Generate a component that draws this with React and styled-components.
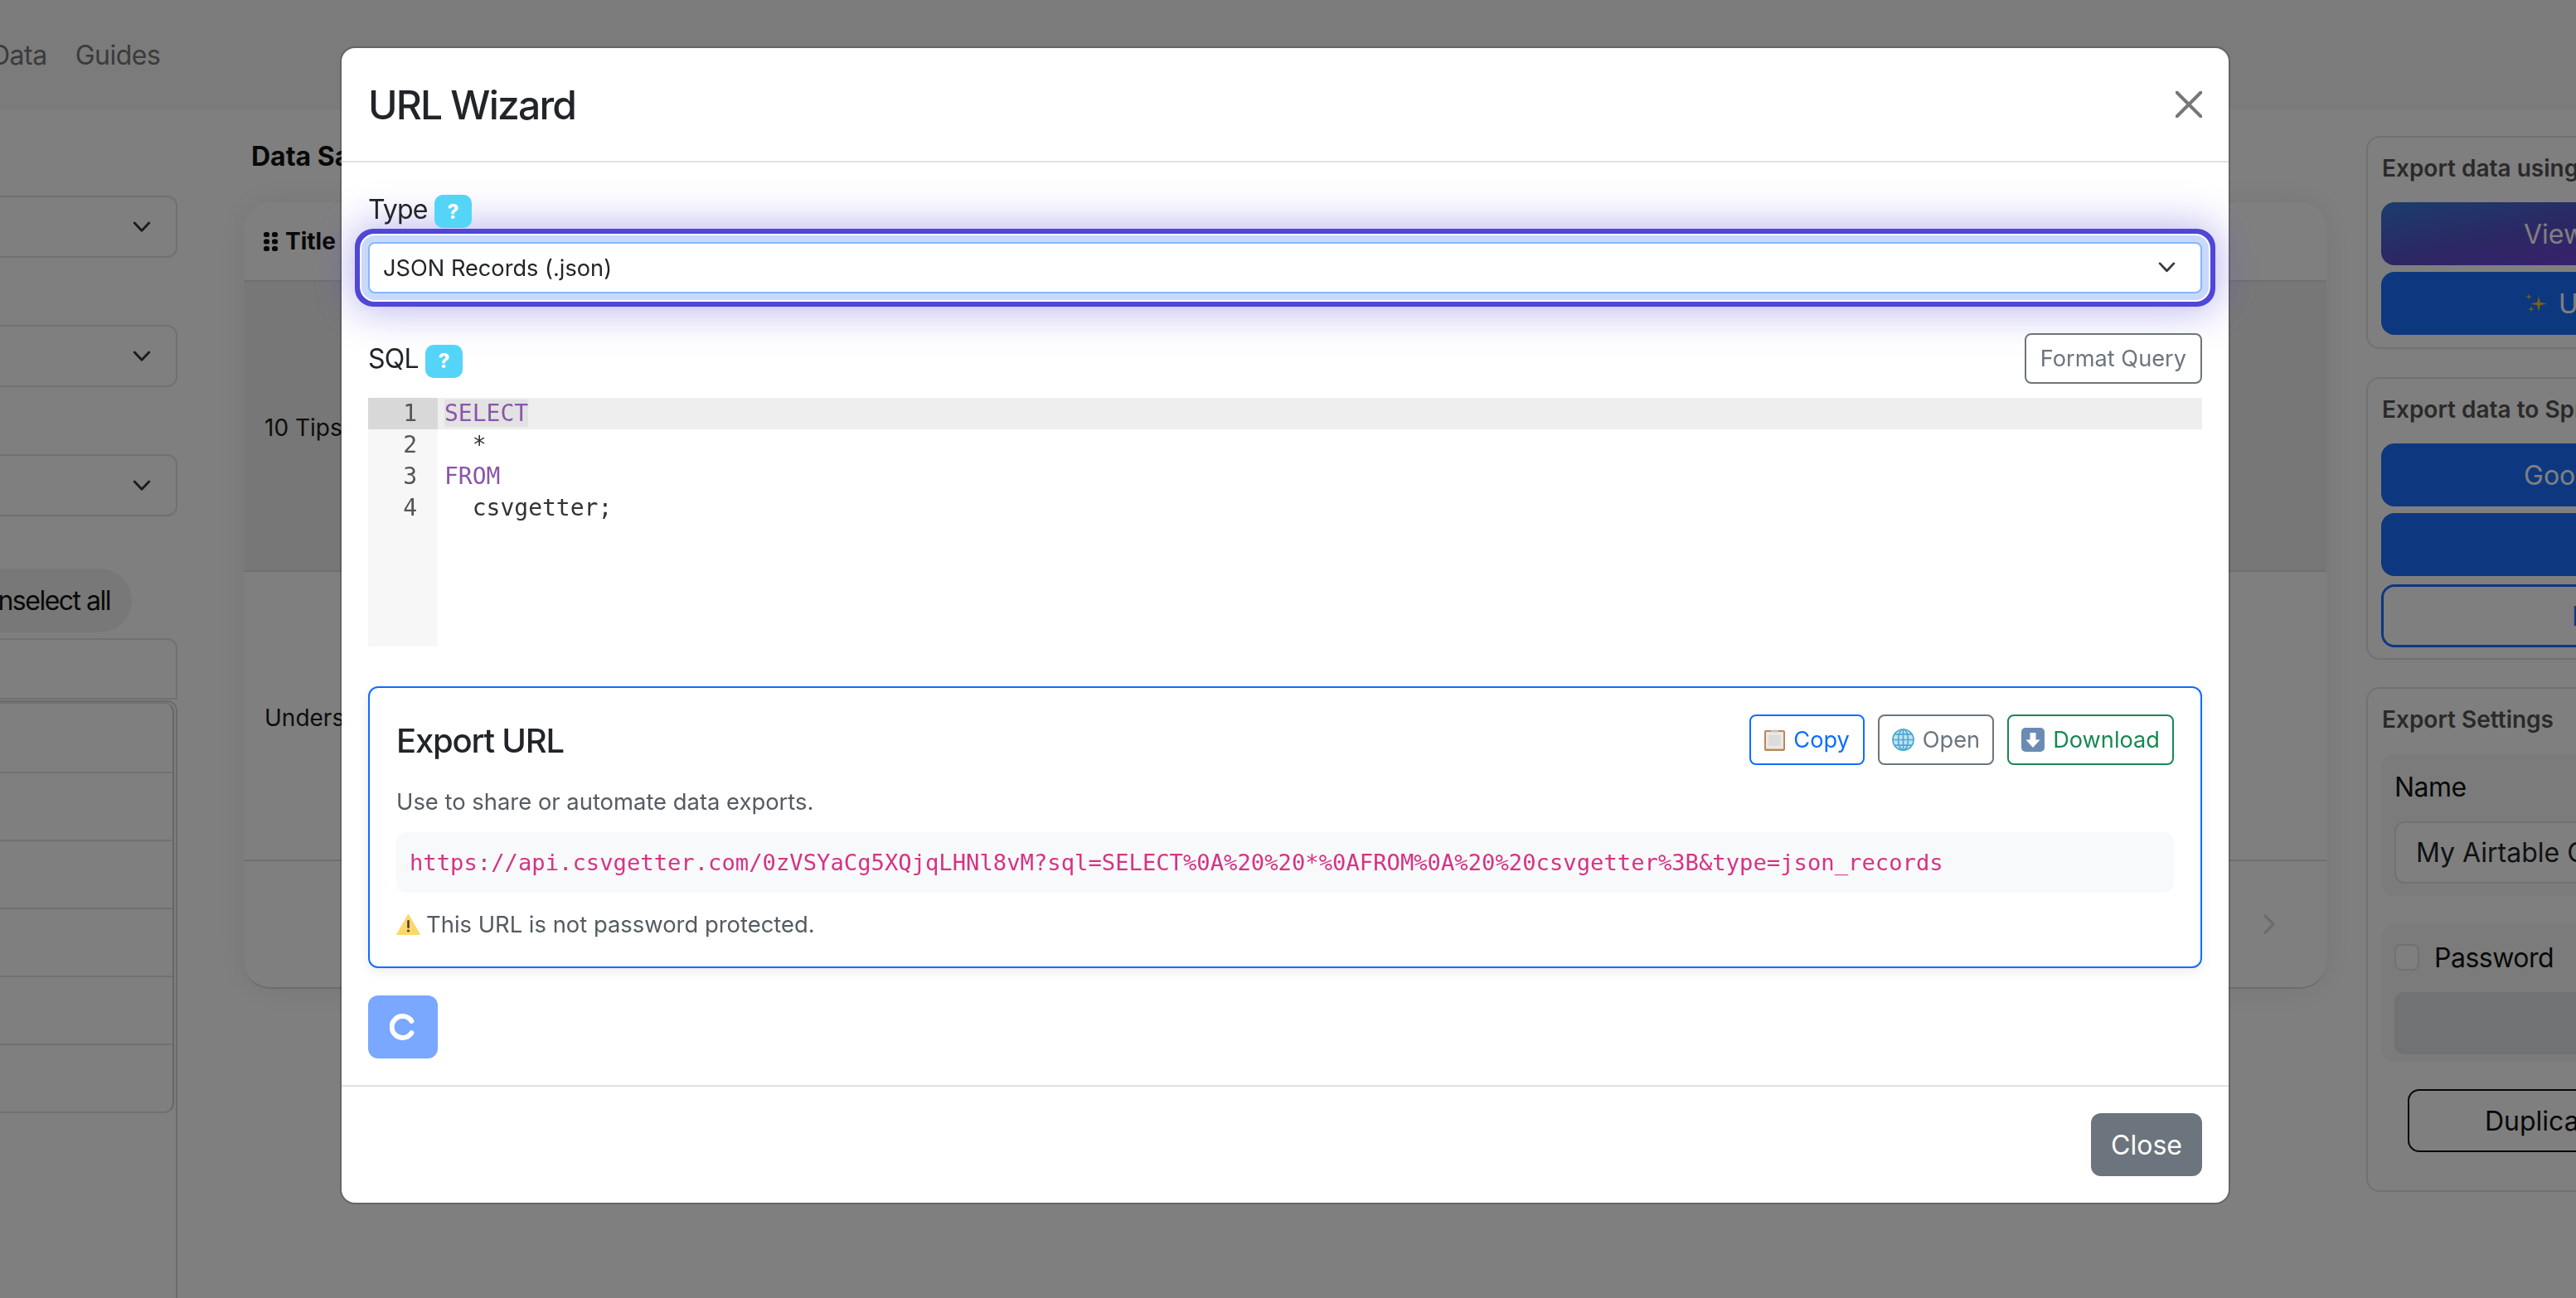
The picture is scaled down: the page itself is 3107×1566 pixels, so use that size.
import React from "react";
import styled, { createGlobalStyle } from "styled-components";

const GlobalStyle = createGlobalStyle`
  html, body {
    margin: 0;
    width: 3107px;
    height: 1566px;
    overflow: hidden;
    background: #fff;
    font-family: Inter, "Liberation Sans", sans-serif;
    color: #212529;
  }
  * { box-sizing: border-box; }
`;

const Page = styled.div`
  width: 3107px;
  height: 1566px;
  display: flex;
  flex-direction: column;
  overflow: hidden;
`;

const Navbar = styled.div`
  height: 133px;
  flex: none;
  background: #f7f7f7;
  display: flex;
  align-items: center;
  gap: 34px;
  margin-left: -11px;
  font-size: 32px;
  letter-spacing: -0.5px;
  color: #777;
`;

const Columns = styled.div`
  flex: 1;
  display: flex;
  min-height: 0;
`;

const Sidebar = styled.div`
  width: 214px;
  flex: none;
  padding-top: 103px;
  display: flex;
  flex-direction: column;
  overflow: hidden;
`;

const SideSelect = styled.div`
  height: 75px;
  flex: none;
  margin: ${({ $top }) => $top || 0}px 0 0 -40px;
  border: 2px solid #dee2e6;
  border-radius: 12px;
  display: flex;
  align-items: center;
  justify-content: flex-end;
  padding-right: 30px;
`;

const Pill = styled.div`
  height: 77px;
  width: 200px;
  flex: none;
  margin: 63px 0 0 -41px;
  border-radius: 39px;
  background: #f0f0f0;
  display: flex;
  align-items: center;
  justify-content: flex-end;
  padding-right: 26px;
  font-size: 32px;
  letter-spacing: -1.5px;
  color: #111;
  white-space: nowrap;
`;

const SideInput = styled.div`
  height: 74px;
  flex: none;
  margin: 7px 0 0 -40px;
  border: 2px solid #dee2e6;
  border-radius: 12px 12px 0 0;
`;

const ListFrame = styled.div`
  flex: 1;
  margin: 1px 0 0 -40px;
  border-right: 2px solid #d4d6d9;
  border-top: 2px solid #d4d6d9;
  border-top-right-radius: 12px;
`;

const ListGroup = styled.div`
  margin-right: 2px;
  border: 2px solid #dee2e6;
  border-right-color: #ccc;
  border-radius: 0 12px 12px 0;
`;

const ListRow = styled.div`
  height: 82px;
  border-top: ${({ $first }) => ($first ? "none" : "2px solid #dee2e6")};
`;

const Center = styled.div`
  width: 2512px;
  flex: none;
  margin-left: 80px;
  padding-top: 38px;
`;

const SectionTitle = styled.div`
  font-size: 32px;
  line-height: 36px;
  font-weight: 700;
  color: #111;
  margin-left: 9px;
`;

const TableCard = styled.div`
  margin-top: 37px;
  height: 949px;
  border-radius: 32px;
  box-shadow: 0 0 40px rgba(0, 0, 0, 0.08);
  border-bottom: 2px solid #d8d8d8;
  display: flex;
  flex-direction: column;
  overflow: hidden;
`;

const TableHead = styled.div`
  height: 96px;
  flex: none;
  border-bottom: 2px solid #dedede;
  display: flex;
  align-items: center;
  gap: 9px;
  padding-left: 24px;
  font-size: 28px;
  font-weight: 700;
  color: #111;
`;

const TableRow = styled.div`
  height: ${({ $h }) => $h}px;
  flex: none;
  background: ${({ $hover }) => ($hover ? "#eeeeee" : "#fff")};
  border-bottom: 2px solid #dedede;
  display: flex;
  align-items: center;
  padding: 4px 0 0 25px;
  font-size: 28px;
  color: #1a1a1a;
`;

const TableFoot = styled.div`
  flex: 1;
  display: flex;
  align-items: center;
  justify-content: flex-end;
  padding-right: 62px;
`;

const RightColumn = styled.div`
  width: 560px;
  flex: none;
  margin-left: 48px;
  padding-top: 31px;
`;

const Panel = styled.div`
  height: ${({ $h }) => $h}px;
  margin-bottom: ${({ $gap }) => $gap || 0}px;
  border: 2px solid #dee2e6;
  border-radius: 16px;
  padding: 0 16px;
`;

const PanelTitle = styled.div`
  height: 78px;
  display: flex;
  align-items: center;
  padding: 0 1px 4px;
  font-size: 28px;
  font-weight: 600;
  color: #555;
`;

const WideButton = styled.div`
  height: 76px;
  margin-bottom: ${({ $gap }) => $gap ?? 8}px;
  border-radius: 16px;
  border: ${({ $outline }) => ($outline ? "3px solid #1a70ff" : "none")};
  background: ${({ $outline, $gradient }) =>
    $gradient
      ? "linear-gradient(168deg, #367ada 0%, #5a4ec8 40%, #8e38f0 100%)"
      : $outline
      ? "#fff"
      : "#1a70ff"};
  color: ${({ $outline }) => ($outline ? "#1a70ff" : "#fff")};
  display: flex;
  align-items: center;
  gap: 12px;
  padding-left: ${({ $indent }) => $indent}px;
  font-size: 32px;
  white-space: nowrap;
`;

const SettingsBlock = styled.div`
  height: ${({ $h }) => $h}px;
  margin-bottom: 34px;
  border-radius: 16px;
  background: #f6f6f6;
  padding: 15px 16px 0;
`;

const FieldLabel = styled.div`
  height: 50px;
  display: flex;
  align-items: center;
  font-size: 32px;
  letter-spacing: -0.5px;
  color: #111;
  gap: 18px;
  margin-bottom: 17px;
`;

const FieldInput = styled.div`
  height: 75px;
  border: 2px solid #dee2e6;
  border-radius: 12px;
  background: ${({ $disabled }) => ($disabled ? "#e1e4e9" : "#fff")};
  display: flex;
  align-items: center;
  padding-left: 24px;
  font-size: 32px;
  color: #212529;
  white-space: nowrap;
`;

const CheckBox = styled.div`
  width: 30px;
  height: 32px;
  border: 2px solid #dee2e6;
  border-radius: 8px;
  background: #fff;
`;

const OutlineDark = styled.div`
  height: 76px;
  margin: -2px 0 0 32px;
  border: 2px solid #111;
  border-radius: 14px;
  display: flex;
  align-items: center;
  padding-left: 91px;
  font-size: 32px;
  color: #111;
  white-space: nowrap;
`;

const Backdrop = styled.div`
  position: fixed;
  inset: 0;
  background: rgba(0, 0, 0, 0.5);
`;

const Modal = styled.div`
  position: fixed;
  top: 58px;
  left: 412px;
  width: 2276px;
  height: 1393px;
  background: #fff;
  border-radius: 16px;
  box-shadow: 0 0 0 2px rgba(0, 0, 0, 0.2);
  display: flex;
  flex-direction: column;
`;

const ModalHeader = styled.div`
  height: 138px;
  flex: none;
  border-bottom: 2px solid #dee2e6;
  display: flex;
  align-items: center;
  justify-content: space-between;
  padding: 0 32px;
`;

const ModalTitle = styled.div`
  font-size: 48px;
  font-weight: 500;
  letter-spacing: -1.8px;
  color: #212529;
`;

const ModalBody = styled.div`
  flex: 1;
  padding: 32px 32px 0;
`;

const LabelRow = styled.div`
  height: ${({ $h }) => $h}px;
  display: flex;
  align-items: center;
  justify-content: ${({ $split }) => ($split ? "space-between" : "flex-start")};
  margin: ${({ $mt }) => $mt || 0}px 0 ${({ $mb }) => $mb}px;
`;

const LabelGroup = styled.div`
  display: flex;
  align-items: center;
  gap: 8px;
  font-size: 32px;
  letter-spacing: -0.8px;
  color: #212529;
`;

const HelpBadge = styled.span`
  width: 45px;
  height: 40px;
  margin-top: 6px;
  border-radius: 10px;
  background: #54d5f7;
  color: #fff;
  font-size: 24px;
  font-weight: 800;
  display: flex;
  align-items: center;
  justify-content: center;
`;

const TypeSelect = styled.div`
  height: 62px;
  border: 2px solid #86b7fe;
  border-radius: 8px;
  background: #fff;
  box-shadow: 0 0 0 8px #c8d9fc, 0 0 0 10px #fff, 0 0 0 16px #5046d8,
    0 0 50px 20px rgba(80, 70, 216, 0.4);
  display: flex;
  align-items: center;
  justify-content: space-between;
  padding: 0 30px 0 16px;
  font-size: 27.2px;
  color: #212529;
`;

const ActionButton = styled.div`
  height: 61px;
  border: 2px solid ${({ $tone }) => $tone};
  border-radius: 8px;
  background: #fff;
  color: ${({ $tone }) => $tone};
  display: flex;
  align-items: center;
  gap: 10px;
  padding: 0 ${({ $pad }) => $pad || 16}px;
  font-size: 27.2px;
  white-space: nowrap;
`;

const Editor = styled.div`
  height: 300px;
  display: grid;
  grid-template-columns: 84px 1fr;
  grid-auto-rows: 38px;
  background: linear-gradient(to right, #f7f7f7 84px, #fff 84px);
  font-family: "DejaVu Sans Mono", monospace;
  font-size: 28px;
  line-height: 38px;
  color: #333;
`;

const LineNumber = styled.div`
  background: ${({ $active }) => ($active ? "#d8d8d8" : "transparent")};
  color: #555;
  text-align: right;
  padding-right: 25px;
`;

const LineText = styled.div`
  background: ${({ $active }) => ($active ? "#eeeeee" : "transparent")};
  padding-left: 8px;
  white-space: pre;
`;

const Keyword = styled.span`
  color: #8a56a8;
  background: ${({ $match }) => ($match ? "#e2e2e2" : "transparent")};
`;

const ExportCard = styled.div`
  margin-top: 48px;
  border: 2px solid #0d6efd;
  border-radius: 12px;
  padding: 32px 32px 27px;
  box-shadow: 0 4px 14px rgba(0, 0, 0, 0.08);
`;

const CardTop = styled.div`
  display: flex;
  align-items: center;
  justify-content: space-between;
`;

const CardTitle = styled.div`
  padding-top: 2px;
  font-size: 40px;
  font-weight: 500;
  letter-spacing: -1.2px;
  color: #212529;
`;

const ButtonRow = styled.div`
  display: flex;
  gap: 16px;
`;

const Muted = styled.div`
  height: 48px;
  margin-top: ${({ $top }) => $top}px;
  display: flex;
  align-items: center;
  gap: 7px;
  font-size: 27.4px;
  color: #555b60;
`;

const UrlBlock = styled.div`
  height: 73px;
  margin-top: 13px;
  border-radius: 12px;
  background: #f8f9fa;
  display: flex;
  align-items: center;
  padding-left: 16px;
  font-family: "DejaVu Sans Mono", monospace;
  font-size: 27.2px;
  color: #d63384;
  white-space: nowrap;
`;

const ReloadButton = styled.div`
  width: 84px;
  height: 76px;
  margin-top: 33px;
  border-radius: 12px;
  background: #7aa7ff;
  display: flex;
  align-items: center;
  justify-content: center;
`;

const ModalFooter = styled.div`
  height: 142px;
  flex: none;
  border-top: 2px solid #dee2e6;
  display: flex;
  align-items: center;
  justify-content: flex-end;
  padding: 0 32px;
`;

const CloseButton = styled.div`
  width: 134px;
  height: 76px;
  border-radius: 12px;
  background: #6c757d;
  color: #fff;
  font-size: 32px;
  display: flex;
  align-items: center;
  justify-content: center;
`;

const Chevron = ({ color = "#343a40", width = 22 }) => (
  <svg width={width} height={width * 0.62} viewBox="0 0 22 14" fill="none">
    <path d="M2 2l9 9.5L20 2" stroke={color} strokeWidth="3" strokeLinecap="round" strokeLinejoin="round" />
  </svg>
);

const CloseIcon = () => (
  <svg width="32" height="32" viewBox="0 0 32 32" fill="none">
    <path d="M1.5 1.5l29 29M30.5 1.5l-29 29" stroke="#777" strokeWidth="4" strokeLinecap="round" />
  </svg>
);

const GripIcon = () => (
  <svg width="17" height="23" viewBox="0 0 17 23" fill="#111">
    <rect x="0" y="0" width="7" height="6" rx="2.5" />
    <rect x="10" y="0" width="7" height="6" rx="2.5" />
    <rect x="0" y="8.5" width="7" height="6" rx="2.5" />
    <rect x="10" y="8.5" width="7" height="6" rx="2.5" />
    <rect x="0" y="17" width="7" height="6" rx="2.5" />
    <rect x="10" y="17" width="7" height="6" rx="2.5" />
  </svg>
);

const ClipboardIcon = () => (
  <svg width="25" height="27" viewBox="0 0 25 27">
    <rect x="0" y="2" width="25" height="25" rx="2" fill="#b98a55" />
    <rect x="2" y="4" width="21" height="20.5" fill="#e9e9e9" />
    <rect x="5" y="8" width="15" height="13" fill="#dcdcdc" />
    <path d="M8 4.5V2.5h3C11.3.5 13.7.5 14 2.5h3v2z" fill="#c4c8cc" />
  </svg>
);

const GlobeIcon = () => (
  <svg width="27" height="27" viewBox="0 0 27 27" fill="none">
    <circle cx="13.5" cy="13.5" r="13.3" fill="#bfe3f2" />
    <g stroke="#4ea8cf" strokeWidth="1.7">
      <circle cx="13.5" cy="13.5" r="12.5" />
      <ellipse cx="13.5" cy="13.5" rx="6" ry="12.5" />
      <path d="M13.5 1v25M1 13.5h25M3 6.8h21M3 20.2h21" />
    </g>
  </svg>
);

const DownloadIcon = () => (
  <svg width="28" height="29" viewBox="0 0 28 29">
    <rect width="28" height="29" rx="5" fill="#6b8bb3" />
    <path d="M10.5 6h7v8.5h5L14 24 5.5 14.5h5z" fill="#fff" />
  </svg>
);

const WarningIcon = () => (
  <svg width="29" height="26" viewBox="0 0 29 26">
    <path d="M14.5 1L28.5 25.5H.5z" fill="#ffd768" stroke="#ffd768" strokeLinejoin="round" />
    <rect x="13.2" y="8" width="2.6" height="10" rx="1.2" fill="#444" />
    <circle cx="14.5" cy="21" r="1.6" fill="#444" />
  </svg>
);

const SparkleIcon = () => (
  <svg width="29" height="29" viewBox="0 0 29 29" fill="#f1c22f">
    <path d="M17 5l1.8 7.7 8.2 1.8-8.2 1.8L17 24l-1.8-7.7-8.2-1.8 8.2-1.8z" />
    <path d="M5 2l.8 3.2L9 6l-3.2.8L5 10l-.8-3.2L1 6l3.2-.8z" />
    <path d="M8 17l.8 3.2 3.2.8-3.2.8L8 25l-.8-3.2L4 21l3.200-.8z" />
  </svg>
);

const Spinner = () => (
  <svg width="32" height="32" viewBox="0 0 32 32" fill="none">
    <path d="M26.4 8.8A13 13 0 1 0 26.4 23.2" stroke="#fff" strokeWidth="6" strokeLinecap="round" />
  </svg>
);

const PageArrow = () => (
  <svg width="14" height="24" viewBox="0 0 14 24" fill="none">
    <path d="M2 2l10 10L2 22" stroke="#d8d8d8" strokeWidth="3.4" strokeLinecap="round" strokeLinejoin="round" />
  </svg>
);

const exportUrl =
  "https://api.csvgetter.com/0zVSYaCg5XQjqLHNl8vM?sql=SELECT%0A%20%20*%0AFROM%0A%20%20csvgetter%3B&type=json_records";

const App = () => {
  return (
    <>
      <GlobalStyle />
      <Page>
        <Navbar>
          <span>Data</span>
          <span>Guides</span>
        </Navbar>
        <Columns>
          <Sidebar>
            <SideSelect><Chevron /></SideSelect>
            <SideSelect $top={81}><Chevron /></SideSelect>
            <SideSelect $top={81}><Chevron /></SideSelect>
            <Pill>Unselect all</Pill>
            <SideInput />
            <ListFrame>
              <ListGroup>
                {[0, 1, 2, 3, 4, 5].map((i) => (
                  <ListRow key={i} $first={i === 0} />
                ))}
              </ListGroup>
            </ListFrame>
          </Sidebar>
          <Center>
            <SectionTitle>Data Sample</SectionTitle>
            <TableCard>
              <TableHead><GripIcon />Title</TableHead>
              <TableRow $h={350} $hover>10 Tips for Better Data</TableRow>
              <TableRow $h={349}>Understanding CSV Exports</TableRow>
              <TableFoot><PageArrow /></TableFoot>
            </TableCard>
          </Center>
          <RightColumn>
            <Panel $h={257} $gap={34}>
              <PanelTitle>Export data using an API</PanelTitle>
              <WideButton $gradient $indent={172}>View Docs</WideButton>
              <WideButton $indent={173}><SparkleIcon />Use AI</WideButton>
            </Panel>
            <Panel $h={341} $gap={33}>
              <PanelTitle>Export data to Spreadsheets</PanelTitle>
              <WideButton $indent={172}>Google Sheets</WideButton>
              <WideButton $gap={10} />
              <WideButton $outline $indent={227}>New Export</WideButton>
            </Panel>
            <Panel $h={609}>
              <PanelTitle>Export Settings</PanelTitle>
              <SettingsBlock $h={172}>
                <FieldLabel>Name</FieldLabel>
                <FieldInput>My Airtable CSV Getter</FieldInput>
              </SettingsBlock>
              <SettingsBlock $h={167}>
                <FieldLabel><CheckBox />Password</FieldLabel>
                <FieldInput $disabled />
              </SettingsBlock>
              <OutlineDark>Duplicate</OutlineDark>
            </Panel>
          </RightColumn>
        </Columns>
      </Page>
      <Backdrop />
      <Modal>
        <ModalHeader>
          <ModalTitle>URL Wizard</ModalTitle>
          <CloseIcon />
        </ModalHeader>
        <ModalBody>
          <LabelRow $h={48} $mb={16}>
            <LabelGroup>Type<HelpBadge>?</HelpBadge></LabelGroup>
          </LabelRow>
          <TypeSelect>
            JSON Records (.json)
            <Chevron width={21} />
          </TypeSelect>
          <LabelRow $h={61} $mt={48} $mb={17} $split>
            <LabelGroup>SQL<HelpBadge>?</HelpBadge></LabelGroup>
            <ActionButton $tone="#6c757d" $pad={17}>Format Query</ActionButton>
          </LabelRow>
          <Editor>
            <LineNumber $active>1</LineNumber>
            <LineText $active><Keyword $match>SELECT</Keyword></LineText>
            <LineNumber>2</LineNumber>
            <LineText>{"  *"}</LineText>
            <LineNumber>3</LineNumber>
            <LineText><Keyword>FROM</Keyword></LineText>
            <LineNumber>4</LineNumber>
            <LineText>{"  csvgetter;"}</LineText>
          </Editor>
          <ExportCard>
            <CardTop>
              <CardTitle>Export URL</CardTitle>
              <ButtonRow>
                <ActionButton $tone="#0d6efd" $pad={16}><ClipboardIcon />Copy</ActionButton>
                <ActionButton $tone="#6c757d" $pad={15}><GlobeIcon />Open</ActionButton>
                <ActionButton $tone="#198754" $pad={15}><DownloadIcon />Download</ActionButton>
              </ButtonRow>
            </CardTop>
            <Muted $top={20}>Use to share or automate data exports.</Muted>
            <UrlBlock>{exportUrl}</UrlBlock>
            <Muted $top={14}><WarningIcon />This URL is not password protected.</Muted>
          </ExportCard>
          <ReloadButton><Spinner /></ReloadButton>
        </ModalBody>
        <ModalFooter>
          <CloseButton>Close</CloseButton>
        </ModalFooter>
      </Modal>
    </>
  );
};

export default App;
